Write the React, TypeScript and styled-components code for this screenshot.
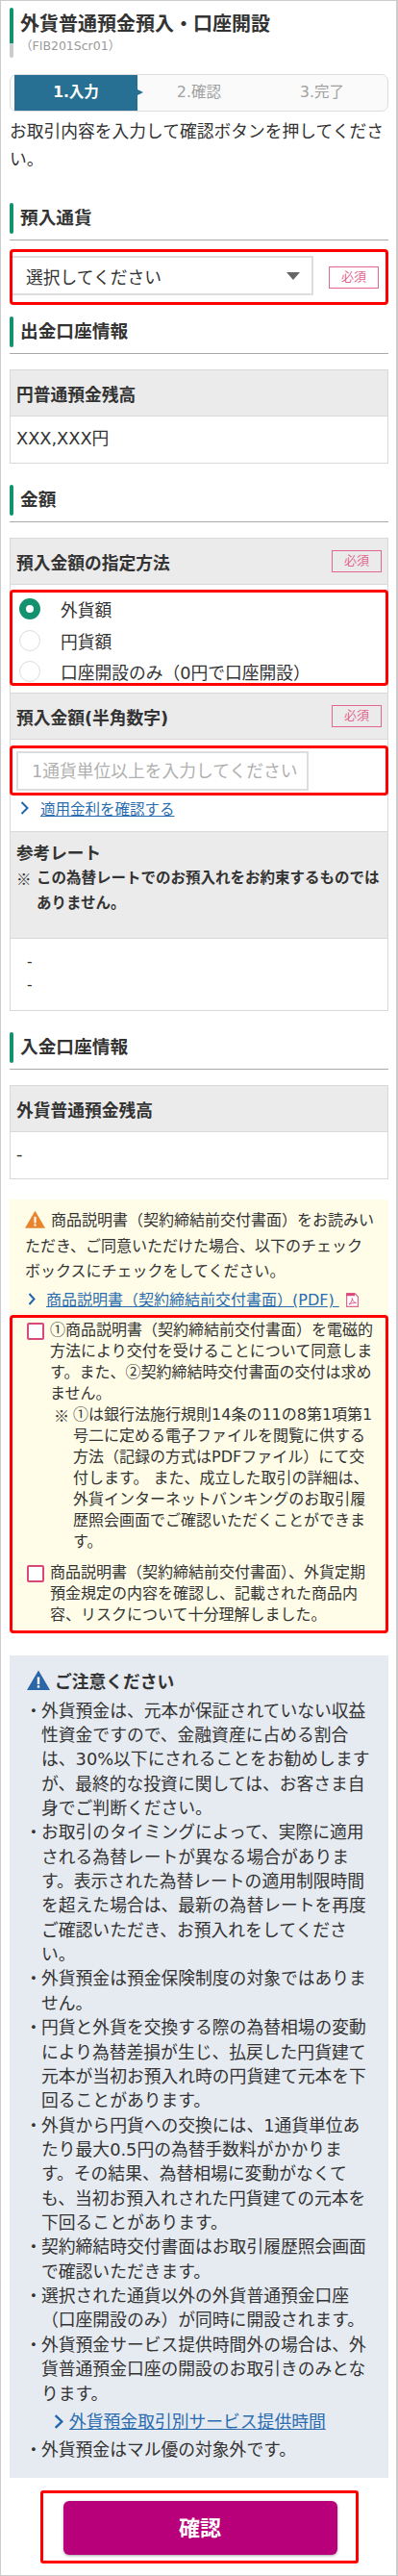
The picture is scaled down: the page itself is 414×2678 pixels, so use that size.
import React from "react";
import styled, { createGlobalStyle } from "styled-components";

const FONT = `"DejaVu Sans", "Noto Sans CJK JP", "Noto Sans", sans-serif`;
const CJK = `"Noto Sans CJK JP", "Noto Sans", sans-serif`;

const Global = createGlobalStyle`
  html, body { margin: 0; padding: 0; background: #fff; }
  body {
    font-family: ${FONT};
    color: #333;
  }
  * { box-sizing: border-box; }
`;

const Page = styled.main`
  width: 414px;
  height: 2678px;
  border: 1px solid #ccc;
  border-right-width: 2px;
  padding: 7px 8px 0 9px;
  overflow: hidden;
`;

const TitleBlock = styled.header`
  display: flex;
  height: 52px;
  gap: 7px;
`;
const TitleBar = styled.span`
  flex: none;
  width: 4px;
  height: 52px;
  border-radius: 2px;
  background: linear-gradient(#149270 0 37px, #ccc 37px 100%);
`;
const TitleText = styled.div`
  padding-top: 2px;
`;
const Title = styled.h1`
  margin: 0;
  font-size: 20px;
  line-height: 30px;
  font-weight: 700;
  white-space: nowrap;
`;
const SubTitle = styled.div`
  font-size: 12.5px;
  line-height: 16px;
  color: #999;
`;

const Stepper = styled.ol`
  display: grid;
  grid-template-columns: repeat(3, 128px);
  height: 39px;
  margin: 17px 0 0;
  padding: 0 0 0 4px;
  list-style: none;
  border: 1px solid #ddd;
  border-radius: 7px;
  background: #fafafa;
`;
const Step = styled.li<{ $active?: boolean }>`
  position: relative;
  text-align: center;
  font-size: 15.5px;
  line-height: 37px;
  font-weight: ${(p) => (p.$active ? 700 : 400)};
  color: ${(p) => (p.$active ? "#fff" : "#a0a0a0")};
  background: ${(p) => (p.$active ? "#277094" : "transparent")};
  ${(p) =>
    p.$active
      ? `&::after {
          content: "";
          position: absolute;
          left: 100%;
          top: 15px;
          border-left: 6px solid #277094;
          border-top: 3.5px solid transparent;
          border-bottom: 3.5px solid transparent;
        }`
      : ""}
`;

const Lead = styled.p`
  margin: 7px 0 0;
  font-size: 17.75px;
  line-height: 29px;
  white-space: nowrap;
`;

const SectionHead = styled.h2<{ $top: number }>`
  display: flex;
  gap: 7px;
  height: 39px;
  margin: ${(p) => p.$top}px 0 0;
  border-bottom: 1px solid #aaa;
  font-size: 18.7px;
  line-height: 32px;
  font-weight: 700;
  &::before {
    content: "";
    flex: none;
    width: 4px;
    height: 32px;
    border-radius: 2px;
    background: #149270;
  }
`;

const RedBox = styled.div`
  border: 3px solid #f00;
  border-radius: 4px;
`;

const SelectBox = styled(RedBox)`
  display: flex;
  align-items: center;
  height: 58px;
  margin-top: 9px;
  overflow: hidden;
`;
const SelectField = styled.div`
  display: flex;
  align-items: center;
  justify-content: space-between;
  flex: none;
  width: 313px;
  height: 41px;
  margin-top: -3px;
  padding: 0 12px 0 14px;
  border: 2px solid #ddd;
  border-left: 0;
  font-size: 17.75px;
`;
const Caret = styled.span`
  width: 0;
  height: 0;
  border-top: 8px solid #666;
  border-left: 7.5px solid transparent;
  border-right: 7.5px solid transparent;
`;
const Badge = styled.span<{ $left?: number }>`
  flex: none;
  width: 52px;
  height: 23px;
  margin-left: ${(p) => p.$left ?? 0}px;
  border: 1px solid #e2668f;
  color: #e2668f;
  font-size: 13px;
  font-weight: 400;
  line-height: 20px;
  text-align: center;
`;

const Table = styled.section<{ $top: number }>`
  margin-top: ${(p) => p.$top}px;
  border: 1px solid #d9d9d9;
  border-bottom-width: 1.5px;
`;
const Head = styled.div`
  display: flex;
  align-items: center;
  justify-content: space-between;
  height: 48px;
  padding: 0 6px;
  background: #ebebeb;
  border-bottom: 1px solid #d9d9d9;
  font-size: 17.75px;
  font-weight: 700;
  white-space: nowrap;
`;
const Cell = styled.div`
  height: 48px;
  padding: 0 6px;
  font-size: 17.75px;
  line-height: 46px;
`;
const RadioCell = styled.div`
  padding: 5px 0 7px;
  border-bottom: 1px solid #d9d9d9;
`;
const RadioBox = styled(RedBox)`
  display: flex;
  flex-direction: column;
  gap: 10.5px;
  height: 100px;
  margin: 0 -1px;
  padding: 6px 0 0 7px;
`;
const RadioRow = styled.label`
  display: flex;
  align-items: center;
  gap: 21px;
  height: 22px;
  font-size: 17.75px;
  white-space: nowrap;
`;
const Radio = styled.span<{ $on?: boolean }>`
  flex: none;
  width: 22px;
  height: 22px;
  border-radius: 50%;
  background: #fff;
  border: ${(p) => (p.$on ? "7px solid #149270" : "1.5px solid #ddd")};
`;
const AmountCell = styled.div`
  padding: 6px 0 12px;
  border-bottom: 1px solid #d9d9d9;
`;
const InputBox = styled(RedBox)`
  height: 52px;
  margin: 0 -1px;
  padding: 3px 0 0 4px;
`;
const AmountInput = styled.input`
  display: block;
  width: 304px;
  height: 41px;
  padding: 0 0 0 14px;
  border: 2px solid #ddd;
  border-radius: 0;
  outline: 0;
  background: #fff;
  font: 17.75px ${FONT};
  &::placeholder {
    color: #b0b0b0;
    opacity: 1;
  }
`;
const TextLink = styled.a<{ $size: number }>`
  color: #2a6cb0;
  text-decoration: underline;
  font-size: ${(p) => p.$size}px;
  white-space: nowrap;
`;
const LinkRow = styled.div<{ $left: number; $gap: number; $height: number }>`
  display: flex;
  align-items: center;
  gap: ${(p) => p.$gap}px;
  height: ${(p) => p.$height}px;
  padding-left: ${(p) => p.$left}px;
`;
const RateHead = styled.div`
  padding: 9px 6px 23px;
  background: #ebebeb;
  border-bottom: 1px solid #d9d9d9;
  font-weight: 700;
`;
const RateTitle = styled.div`
  font-size: 17.6px;
  line-height: 26px;
`;
const RateNote = styled.div`
  display: flex;
  font-size: 15.5px;
  line-height: 26px;
  white-space: nowrap;
`;
const RateMark = styled.span`
  flex: none;
  width: 21px;
  font-family: ${CJK};
`;
const RateBody = styled.div`
  height: 74px;
  padding: 12px 0 0 17px;
  font-size: 15.5px;
  line-height: 24px;
`;

const Notice = styled.section`
  margin-top: 21px;
  padding-top: 9px;
  background: #fffde8;
  font-size: 16px;
`;
const NoticeText = styled.p`
  margin: 0;
  padding-left: 16px;
  line-height: 26.5px;
  white-space: nowrap;
`;
const NoticeIcon = styled.span`
  display: inline-block;
  width: 21px;
  height: 19px;
  margin-right: 6px;
  vertical-align: -3px;
  line-height: 0;
`;
const AgreeBox = styled(RedBox)`
  margin-top: 2px;
  padding: 2px 0 5px 15px;
  line-height: 22px;
`;
const AgreeRow = styled.label`
  display: flex;
  gap: 6px;
  & + & {
    margin-top: 10px;
  }
`;
const Check = styled.span`
  flex: none;
  width: 18px;
  height: 18px;
  margin-top: 3px;
  border: 2px solid #d9487a;
  border-radius: 2px;
  background: #fff;
`;
const AgreeText = styled.div`
  white-space: nowrap;
`;
const AgreeNote = styled.div`
  display: flex;
  padding-left: 4px;
`;
const AgreeMark = styled.span`
  flex: none;
  width: 20px;
  font-family: ${CJK};
`;
const Circled = styled.span`
  font-family: ${CJK};
  line-height: 0;
`;
const PdfWrap = styled.span`
  display: block;
  margin: 3px 0 0 -4px;
  line-height: 0;
`;

const Caution = styled.section`
  margin-top: 23px;
  padding: 15px 0 17px 16px;
  background: #e6eaf1;
`;
const CautionHead = styled.div`
  display: flex;
  align-items: center;
  gap: 5px;
  height: 22px;
  padding-left: 2px;
  font-size: 17.75px;
  font-weight: 700;
`;
const CautionList = styled.ul`
  margin: 8px 0 0;
  padding: 0;
  list-style: none;
  font-size: 17.8px;
  line-height: 25.36px;
  white-space: nowrap;
`;
const CautionItem = styled.li`
  display: flex;
`;
const Dot = styled.span`
  flex: none;
  width: 17px;
  font-size: 17.8px;
`;

const ConfirmBox = styled(RedBox)`
  width: 331px;
  height: 76px;
  margin: 13px auto 0;
  padding: 8px 0 0 21px;
  border-radius: 3px;
`;
const ConfirmButton = styled.button`
  display: block;
  width: 285px;
  height: 56px;
  padding: 0 0 4px;
  border: 0;
  border-radius: 6px;
  background: #b8007b;
  box-shadow: 0 1px 3px rgba(0, 0, 0, 0.35);
  color: #fff;
  font: 700 22px ${FONT};
`;

const Chevron = ({ w, h, sw }: { w: number; h: number; sw: number }) => (
  <svg width={w} height={h} viewBox={`0 0 ${w} ${h}`} fill="none" aria-hidden="true">
    <path
      d={`M${sw / 2 + 0.5} ${sw / 2} L${w - sw / 2 - 0.5} ${h / 2} L${sw / 2 + 0.5} ${h - sw / 2}`}
      stroke="#1f66ad"
      strokeWidth={sw}
    />
  </svg>
);

const Triangle = ({ size, h, color }: { size: number; h: number; color: string }) => (
  <svg width={size} height={h} viewBox="0 0 24 21" aria-hidden="true">
    <path d="M12 0.5 L24 21 H0 Z" fill={color} />
    <rect x="10.8" y="7.5" width="2.4" height="7.5" fill="#fff" />
    <rect x="10.8" y="16.2" width="2.4" height="2.4" fill="#fff" />
  </svg>
);

const PdfIcon = () => (
  <svg width="13" height="15" viewBox="0 0 13 15" fill="none" aria-hidden="true">
    <path d="M0.6 0.6 H9 L12.4 4 V14.4 H0.6 Z" fill="#fff" stroke="#e2668f" strokeWidth="1.2" />
    <path d="M0.6 0.6 H9 V3.2 H0.6 Z" fill="#d9487a" />
    <path d="M3 12 C5 10.5 6.5 8 6.3 5.6 C6.6 8 8 10 10.4 10.6 C8 10.4 5.4 10.8 3 12 Z" stroke="#d9487a" strokeWidth="0.9" />
  </svg>
);

export default function App() {
  return (
    <Page>
      <Global />
      <TitleBlock>
        <TitleBar />
        <TitleText>
          <Title>外貨普通預金預入・口座開設</Title>
          <SubTitle>（FIB201Scr01）</SubTitle>
        </TitleText>
      </TitleBlock>

      <Stepper>
        <Step $active>1.入力</Step>
        <Step>2.確認</Step>
        <Step>3.完了</Step>
      </Stepper>
      <Lead>
        お取引内容を入力して確認ボタンを押してくださ
        <br />
        い。
      </Lead>

      <SectionHead $top={30}>預入通貨</SectionHead>
      <SelectBox>
        <SelectField>
          選択してください
          <Caret />
        </SelectField>
        <Badge $left={16}>必須</Badge>
      </SelectBox>

      <SectionHead $top={12}>出金口座情報</SectionHead>
      <Table $top={16}>
        <Head>円普通預金残高</Head>
        <Cell>XXX,XXX円</Cell>
      </Table>

      <SectionHead $top={22}>金額</SectionHead>
      <Table $top={16}>
        <Head>
          預入金額の指定方法
          <Badge>必須</Badge>
        </Head>
        <RadioCell>
          <RadioBox>
            <RadioRow>
              <Radio $on />
              外貨額
            </RadioRow>
            <RadioRow>
              <Radio />
              円貨額
            </RadioRow>
            <RadioRow>
              <Radio />
              口座開設のみ（0円で口座開設）
            </RadioRow>
          </RadioBox>
        </RadioCell>
        <Head>
          預入金額(半角数字)
          <Badge>必須</Badge>
        </Head>
        <AmountCell>
          <InputBox>
            <AmountInput placeholder="1通貨単位以上を入力してください" />
          </InputBox>
          <LinkRow $left={10} $gap={12} $height={25}>
            <Chevron w={9} h={14} sw={2} />
            <TextLink $size={15.5}>適用金利を確認する</TextLink>
          </LinkRow>
        </AmountCell>
        <RateHead>
          <RateTitle>参考レート</RateTitle>
          <RateNote>
            <RateMark>※</RateMark>
            <span>
              この為替レートでのお預入れをお約束するものでは
              <br />
              ありません。
            </span>
          </RateNote>
        </RateHead>
        <RateBody>
          -
          <br />-
        </RateBody>
      </Table>

      <SectionHead $top={22}>入金口座情報</SectionHead>
      <Table $top={16}>
        <Head>外貨普通預金残高</Head>
        <Cell>-</Cell>
      </Table>

      <Notice>
        <NoticeText>
          <NoticeIcon>
            <Triangle size={21} h={19} color="#e8842c" />
          </NoticeIcon>
          商品説明書（契約締結前交付書面）をお読みい
          <br />
          ただき、ご同意いただけた場合、以下のチェック
          <br />
          ボックスにチェックをしてください。
        </NoticeText>
        <LinkRow $left={19} $gap={11} $height={29}>
          <Chevron w={8} h={13} sw={2} />
          <TextLink $size={16}>商品説明書（契約締結前交付書面）(PDF)&nbsp;</TextLink>
          <PdfWrap>
            <PdfIcon />
          </PdfWrap>
        </LinkRow>
        <AgreeBox>
          <AgreeRow>
            <Check />
            <AgreeText>
              <Circled>①</Circled>商品説明書（契約締結前交付書面）を電磁的
              <br />
              方法により交付を受けることについて同意しま
              <br />
              す。また、<Circled>②</Circled>契約締結時交付書面の交付は求め
              <br />
              ません。
              <AgreeNote>
                <AgreeMark>※</AgreeMark>
                <span>
                  <Circled>①</Circled>は銀行法施行規則14条の11の8第1項第1
                  <br />
                  号二に定める電子ファイルを閲覧に供する
                  <br />
                  方法（記録の方式はPDFファイル）にて交
                  <br />
                  付します。 また、成立した取引の詳細は、
                  <br />
                  外貨インターネットバンキングのお取引履
                  <br />
                  歴照会画面でご確認いただくことができま
                  <br />
                  す。
                </span>
              </AgreeNote>
            </AgreeText>
          </AgreeRow>
          <AgreeRow>
            <Check />
            <AgreeText>
              商品説明書（契約締結前交付書面）、外貨定期
              <br />
              預金規定の内容を確認し、記載された商品内
              <br />
              容、リスクについて十分理解しました。
            </AgreeText>
          </AgreeRow>
        </AgreeBox>
      </Notice>

      <Caution>
        <CautionHead>
          <Triangle size={24} h={21} color="#2a66a8" />
          ご注意ください
        </CautionHead>
        <CautionList>
          <CautionItem>
            <Dot>・</Dot>
            <span>
              外貨預金は、元本が保証されていない収益
              <br />
              性資金ですので、金融資産に占める割合
              <br />
              は、30%以下にされることをお勧めします
              <br />
              が、最終的な投資に関しては、お客さま自
              <br />
              身でご判断ください。
            </span>
          </CautionItem>
          <CautionItem>
            <Dot>・</Dot>
            <span>
              お取引のタイミングによって、実際に適用
              <br />
              される為替レートが異なる場合がありま
              <br />
              す。表示された為替レートの適用制限時間
              <br />
              を超えた場合は、最新の為替レートを再度
              <br />
              ご確認いただき、お預入れをしてくださ
              <br />
              い。
            </span>
          </CautionItem>
          <CautionItem>
            <Dot>・</Dot>
            <span>
              外貨預金は預金保険制度の対象ではありま
              <br />
              せん。
            </span>
          </CautionItem>
          <CautionItem>
            <Dot>・</Dot>
            <span>
              円貨と外貨を交換する際の為替相場の変動
              <br />
              により為替差損が生じ、払戻した円貨建て
              <br />
              元本が当初お預入れ時の円貨建て元本を下
              <br />
              回ることがあります。
            </span>
          </CautionItem>
          <CautionItem>
            <Dot>・</Dot>
            <span>
              外貨から円貨への交換には、1通貨単位あ
              <br />
              たり最大0.5円の為替手数料がかかりま
              <br />
              す。その結果、為替相場に変動がなくて
              <br />
              も、当初お預入れされた円貨建ての元本を
              <br />
              下回ることがあります。
            </span>
          </CautionItem>
          <CautionItem>
            <Dot>・</Dot>
            <span>
              契約締結時交付書面はお取引履歴照会画面
              <br />
              で確認いただきます。
            </span>
          </CautionItem>
          <CautionItem>
            <Dot>・</Dot>
            <span>
              選択された通貨以外の外貨普通預金口座
              <br />
              （口座開設のみ）が同時に開設されます。
            </span>
          </CautionItem>
          <CautionItem>
            <Dot>・</Dot>
            <span>
              外貨預金サービス提供時間外の場合は、外
              <br />
              貨普通預金口座の開設のお取引きのみとな
              <br />
              ります。
            </span>
          </CautionItem>
          <LinkRow $left={30} $gap={6} $height={32.6}>
            <Chevron w={10} h={15} sw={2.4} />
            <TextLink $size={17.8}>外貨預金取引別サービス提供時間</TextLink>
          </LinkRow>
          <CautionItem>
            <Dot>・</Dot>
            <span>外貨預金はマル優の対象外です。</span>
          </CautionItem>
        </CautionList>
      </Caution>

      <ConfirmBox>
        <ConfirmButton type="button">確認</ConfirmButton>
      </ConfirmBox>
    </Page>
  );
}
